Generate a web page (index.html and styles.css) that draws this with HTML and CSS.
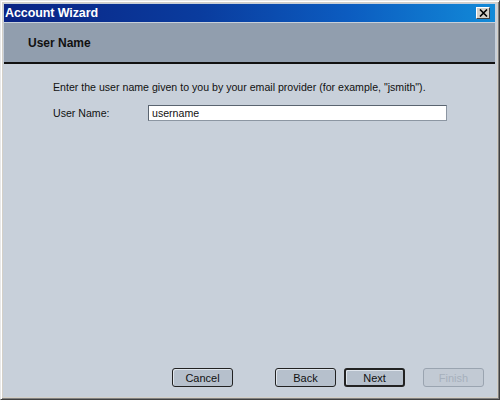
FILE: index.html
```html
<!DOCTYPE html>
<html>
<head>
<meta charset="utf-8">
<link rel="stylesheet" href="styles.css">
</head>
<body>
<div class="window">
  <div class="titlebar">
    <span class="title">Account Wizard</span>
    <button class="close"><svg width="9" height="8" viewBox="0 0 9 8"><path d="M1 0.5 L8 7.5 M8 0.5 L1 7.5" stroke="#000" stroke-width="1.6"/></svg></button>
  </div>
  <div class="header"><span class="htitle">User Name</span></div>
  <div class="content">
    <p class="intro">Enter the user name given to you by your email provider (for example, "jsmith").</p>
    <div class="row">
      <label class="label">User Name:</label>
      <div class="input">username</div>
    </div>
  </div>
  <div class="buttons">
    <button class="btn cancel">Cancel</button>
    <button class="btn back">Back</button>
    <button class="btn default">Next</button>
    <button class="btn disabled">Finish</button>
  </div>
</div>
</body>
</html>
```
FILE: styles.css
```css
html, body { margin: 0; padding: 0; }
body { width: 500px; height: 400px; background: #c8d0da; font-family: "Liberation Sans", Arial, sans-serif; overflow: hidden; }
.window {
  box-sizing: border-box;
  width: 500px; height: 400px;
  border-top: 1px solid #e8e8e8; border-left: 1px solid #e8e8e8;
  border-right: 1px solid #404040; border-bottom: 1px solid #404040;
  background: #c8d0da;
  display: flex; flex-direction: column;
  box-shadow: inset 1px 1px 0 #ffffff, inset -1px -1px 0 #808080, inset 2px 2px 0 #d4d0c8, inset -2px -2px 0 #d4d0c8;
  padding: 3px 4px 3px 3px;
}
.titlebar {
  flex-shrink: 0;
  height: 18px;
  background: linear-gradient(to right, #0a2484 0%, #0a3c9e 40%, #0c5cc0 70%, #128ad8 100%);
  display: flex; align-items: center; justify-content: space-between;
  padding: 0 2px 0 1px;
}
.title { color: #fff; font-weight: bold; font-size: 12.5px; letter-spacing: -0.1px; }
.close {
  width: 14px; height: 12px; padding: 0; margin: 0;
  background: #d4d0c8;
  border-top: 1px solid #fff; border-left: 1px solid #fff;
  border-right: 1px solid #404040; border-bottom: 1px solid #404040;
  display: flex; align-items: center; justify-content: center;
  margin-right: 3px;
}
.header {
  flex-shrink: 0;
  height: 42px;
  background: #919eae;
  border-top: 1px solid #c8d0da;
  border-bottom: 2px solid #111;
  display: flex; align-items: center;
  padding-left: 24px;
  box-sizing: border-box;
}
.htitle { font-weight: bold; font-size: 12px; color: #111; }
.content { flex: 1; padding: 17px 0 0 49px; font-size: 10.6px; color: #111; }
.intro { margin: 0 0 11px 0; line-height: 13px; }
.row { display: flex; align-items: center; }
.label { width: 95px; }
.input {
  box-sizing: border-box;
  width: 299px; height: 16px;
  background: #fff;
  border-top: 1px solid #5a6470; border-left: 1px solid #5a6470;
  border-right: 1px solid #8c96a2; border-bottom: 1px solid #8c96a2;
  padding: 0 0 0 3px; line-height: 14px;
}
.buttons { flex-shrink: 0; display: flex; align-items: center; padding: 0 0 9px 168px; }
.btn {
  flex-shrink: 0;
  box-sizing: border-box;
  width: 61px; height: 19px;
  background: #b6c0cc;
  border: 1px solid #222;
  border-radius: 3px;
  font-family: "Liberation Sans", Arial, sans-serif;
  font-size: 11px; color: #111; padding: 0;
  box-shadow: inset 1px 1px 0 #dfe5ec;
}
.back { margin-left: 42px; }
.default { border-width: 2px; margin-left: 8px; }
.disabled { border-color: #9aa4b0; color: #a6b0bc; background: #c2cad4; margin-left: 18px; box-shadow: none; }
```
